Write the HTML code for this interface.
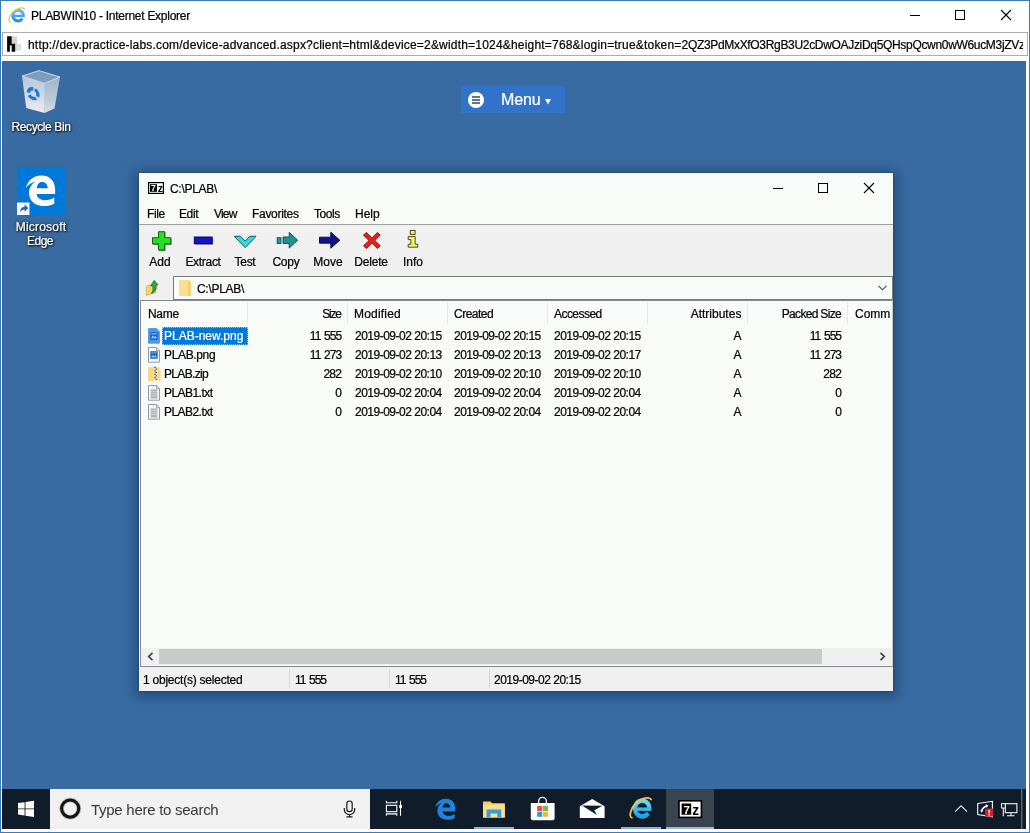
<!DOCTYPE html>
<html lang="en">
<head>
<meta charset="utf-8">
<title>PLABWIN10 - Internet Explorer</title>
<style>
html,body{margin:0;padding:0}
body{width:1030px;height:833px;position:relative;overflow:hidden;background:#fff;font-family:"Liberation Sans",sans-serif;font-size:12px;color:#000}
.a{position:absolute}
.t{position:absolute;white-space:nowrap;line-height:14px;font-size:12px;will-change:transform;-webkit-text-stroke-width:.22px}
svg{position:absolute;overflow:visible}
/* IE frame */
#frame{left:0;top:0;width:1030px;height:833px;background:#3a7ab8}
#inner{left:1px;top:1px;width:1027.5px;height:830.5px;background:#fff}
#addr{left:2px;top:32px;width:1024px;height:22px;border:1px solid #abadb3;background:#fff}
#desk{left:2px;top:61px;width:1024px;height:768px;background:#386ba1;overflow:hidden}
/* taskbar */
#task{left:0;top:728px;width:1024px;height:40px;background:#101c2a}
#search{left:48px;top:0;width:320px;height:40px;background:#f1f1f1}
/* desktop label */
.lbl{color:#fff;text-shadow:1px 1px 2px #000,0 0 3px rgba(0,0,0,.8);text-align:center}

/* 7-zip window (coords inside = page - (139,173)) */
#w7{left:137px;top:112px;width:754px;height:518px;background:#f9fbf9;box-shadow:0 0 0 1px rgba(35,70,115,.6),0 2px 12px 3px rgba(0,20,55,.42)}
#w7 .t{color:#000}
.hd{top:134px}
.sep{position:absolute;top:129px;width:1px;height:22px;background:#e6e8e6}
.r{text-align:right}
</style>
</head>
<body>
<div class="a" id="frame"></div>
<div class="a" id="inner"></div>

<!-- IE title bar -->
<svg style="left:0;top:0" width="30" height="30" viewBox="0 0 30 30">
  <defs><linearGradient id="ieg" x1="0" y1="0" x2="0" y2="1"><stop offset="0" stop-color="#62bdf2"/><stop offset="1" stop-color="#2b8fd8"/></linearGradient></defs>
  <path d="M23.400 15.200A5.300 5.300 0 1 0 22.400 18.700" fill="none" stroke="url(#ieg)" stroke-width="3"/>
  <path d="M13.800 15.900h11" stroke="#3fa6e8" stroke-width="2.300"/>
  <path d="M24.900 9.600C23.500 5.600 12.500 9 9.500 17.300C8.400 20.300 9 21.900 10.600 22.200" fill="none" stroke="#ecc548" stroke-width="1.300"/>
</svg>
<div class="t" style="left:31px;top:9px;letter-spacing:-.27px">PLABWIN10 - Internet Explorer</div>
<div class="a" style="left:910px;top:15px;width:10px;height:1px;background:#000"></div>
<div class="a" style="left:955px;top:10px;width:8px;height:8px;border:1px solid #000"></div>
<svg style="left:1001px;top:10px" width="10" height="10" viewBox="0 0 10 10"><path d="M0 0L10 10M10 0L0 10" stroke="#000" stroke-width="1.1" fill="none"/></svg>
<div class="a" id="addr"></div>
<svg style="left:7px;top:36px" width="15" height="16" viewBox="7 36 15 16">
  <rect x="11.700" y="36.500" width="5.200" height="14.700" fill="#d2d2d2"/><rect x="16.900" y="43.800" width="4.100" height="6.600" fill="#dedede"/>
  <path d="M7.100 36.200H11.700V43.800H15.100V51.800H11.700V45.600H9.900V51.800H7.100Z" fill="#080808"/>
</svg>
<div class="t" id="url" style="left:28px;top:38px;width:995px;overflow:hidden"><span style="letter-spacing:.194px">http://dev.practice-labs.com/device-advanced.aspx?client=html&amp;device=2&amp;width=1024&amp;height=768&amp;login=true&amp;token=</span><span style="letter-spacing:-.32px">2QZ3PdMxXfO3RgB3U2cDwOAJziDq5QHspQcwn0wW6ucM3jZVz</span></div>

<!-- remote desktop -->
<div class="a" id="desk">
  <!-- Recycle Bin (desk coords = page - (2,61)) -->
  <svg style="left:18px;top:8px" width="44" height="46" viewBox="20 69 44 46">
    <defs><linearGradient id="rb1" x1="0" y1="0" x2="0" y2="1"><stop offset="0" stop-color="#b4c6d8"/><stop offset=".6" stop-color="#d3dce6"/><stop offset=".8" stop-color="#e6e2e8"/><stop offset="1" stop-color="#ecebee"/></linearGradient>
    <linearGradient id="rb2" x1="0" y1="0" x2="0" y2="1"><stop offset="0" stop-color="#9db4cb"/><stop offset=".7" stop-color="#c2ccd8"/><stop offset="1" stop-color="#dcdde2"/></linearGradient></defs>
    <path d="M22 76L39 70.600L60 77L44.500 83.500Z" fill="#8da8c4"/>
    <path d="M24 76.200L39 71.600L57.500 77L44.500 82.300Z" fill="#7f9cbc"/>
    <path d="M22 76L44.500 83.500L44.600 113L26.200 108Z" fill="url(#rb1)"/>
    <path d="M44.500 83.500L60 77L54.500 108.500L44.600 113Z" fill="url(#rb2)"/>
    <path d="M22 76L39 70.600L60 77L44.500 83.500Z" fill="none" stroke="#dbe7f2" stroke-width=".9" stroke-opacity=".85"/>
    <path d="M44.500 83.500V113" stroke="#e4ebf2" stroke-width=".6" stroke-opacity=".7"/>
    <g transform="translate(33.200 93.600) skewY(14)">
      <circle r="4.700" fill="none" stroke="#1a7ad2" stroke-width="3.400" stroke-dasharray="7.600 2.240" transform="rotate(-70)"/>
    </g>
  </svg>
  <div class="t lbl" style="left:-11px;top:59px;width:100px;letter-spacing:-.4px">Recycle Bin</div>
  <!-- Microsoft Edge -->
  <div class="a" style="left:15px;top:106px;width:48px;height:49px;background:#0078d7"></div>
  <svg style="left:15px;top:106px" width="48" height="49" viewBox="17 167 48 49">
    <path fill-rule="evenodd" transform="translate(25.800 175.400) scale(1.460 1.450) translate(-435.200 -798.700)" d="M435.200 807.500C436.500 802 440.500 798.700 446 798.700C451.800 798.700 455.300 802.800 455.300 808.600V811.600H442.600C443 814.300 445.200 815.900 448.400 815.900C450.800 815.900 452.900 815.200 454.700 814V818.200C452.700 819.300 450.300 819.800 447.400 819.800C441.400 819.800 437.400 816 437.400 810.800C437.400 807.600 439 804.600 441.800 802.900C439 803.600 436.700 805.200 435.200 807.500ZM442.700 807.600H450.200C450.100 804.900 448.600 803.300 446.300 803.300C444.200 803.300 443 805 442.700 807.600Z" fill="#fff"/>
    <rect x="17" y="202.500" width="12.500" height="12.500" fill="#f4f6f8"/>
    <path d="M20 212.500c.2-3.600 1.800-5.600 4.600-5.800v-2.200l3.600 3.600-3.600 3.600v-2.200c-2 0-3.400.8-4.600 3z" fill="#2060b8"/>
  </svg>
  <div class="t lbl" style="left:-11px;top:158.500px;width:100px;letter-spacing:.19px">Microsoft</div>
  <div class="t lbl" style="left:-12px;top:172.500px;width:100px;letter-spacing:-.5px">Edge</div>
  <!-- Menu button -->
  <div class="a" style="left:459px;top:25px;width:104px;height:27px;background:#3273c9"></div>
  <div class="a" style="left:466px;top:30.500px;width:16px;height:16px;border-radius:50%;background:#fff"></div>
  <div class="a" style="left:470px;top:35px;width:8px;height:1.500px;background:#5b787f;box-shadow:0 3px 0 #5b787f,0 6px 0 #5b787f"></div>
  <div class="t" style="left:498.600px;top:29px;font-size:16px;line-height:20px;color:#fff;letter-spacing:-.1px">Menu</div>
  <svg style="left:543px;top:37.500px" width="6" height="6" viewBox="0 0 6 6"><path d="M0 0H6L3 5.600Z" fill="#fff"/></svg>

<div class="a" id="w7">
    <!-- title -->
    <svg style="left:9px;top:9px;will-change:transform" width="17" height="13" viewBox="0 0 17 13">
      <rect x=".6" y=".6" width="14.800" height="10.800" fill="#fff" stroke="#000" stroke-width="1.200"/>
      <rect x="2" y="2.200" width="7" height="7.600" fill="#000"/>
      <text x="3.100" y="9.200" font-family="Liberation Sans,sans-serif" font-weight="bold" font-size="8.500" fill="#fff">7</text>
      <text x="9.700" y="9.800" font-family="Liberation Sans,sans-serif" font-weight="bold" font-size="11.500" fill="#000" textLength="5.300" lengthAdjust="spacingAndGlyphs">z</text>
    </svg>
    <div class="t" style="left:30.500px;top:9px;letter-spacing:-.3px">C:\PLAB\</div>
    <div class="a" style="left:634px;top:15px;width:10px;height:1px;background:#000"></div>
    <div class="a" style="left:679px;top:10px;width:8px;height:8px;border:1px solid #000"></div>
    <svg style="left:725px;top:10px" width="10" height="10" viewBox="0 0 10 10"><path d="M0 0L10 10M10 0L0 10" stroke="#000" stroke-width="1.1" fill="none"/></svg>
    <!-- menu -->
    <div class="t" style="left:8.300px;top:34px;letter-spacing:-.4px">File</div>
    <div class="t" style="left:40.300px;top:34px;letter-spacing:-.4px">Edit</div>
    <div class="t" style="left:74.500px;top:34px;letter-spacing:-.8px">View</div>
    <div class="t" style="left:113.300px;top:34px;letter-spacing:-.3px">Favorites</div>
    <div class="t" style="left:174.700px;top:34px;letter-spacing:-.45px">Tools</div>
    <div class="t" style="left:216.200px;top:34px">Help</div>
    <div class="a" style="left:0;top:51px;width:754px;height:1px;background:#a0a0a0"></div>
    <!-- toolbar -->
    <div class="a" style="left:0;top:52px;width:754px;height:76px;background:#f0f0f0"></div>
    <svg style="left:0;top:52px" width="300" height="30" viewBox="139 225 300 30">
      <g stroke-linejoin="miter">
      <path d="M159.300 232.600h6.400v6.200h6.200v6.400h-6.200v6.200h-6.400v-6.200h-6.200v-6.400h6.200z" fill="#0a3d0a" opacity=".55" transform="translate(-.2 -.2)"/>
      <path d="M158.500 231.700h6.200v6h6v6.200h-6v6h-6.200v-6h-6v-6.200h6z" fill="#25df25" stroke="#0a6a0a" stroke-width="1"/>
      <rect x="195" y="237.800" width="18.200" height="7" fill="#101038" opacity=".5"/>
      <rect x="194.300" y="237" width="17.800" height="6.600" fill="#1414c8" stroke="#080860" stroke-width="1"/>
      <path d="M234.300 236.300h6.200l4.700 4.800 4.700-4.800h6.100l-10.800 11.300z" fill="#30dcdc" stroke="#0a5a5a" stroke-width="1"/>
      <rect x="277.200" y="237.700" width="3.700" height="5.700" fill="#2a9a9a" stroke="#0a4848" stroke-width=".9"/>
      <path d="M283 237h6.200v-4.700l8.500 7.900-8.500 7.900v-4.700h-6.200z" fill="#1f8f8f" stroke="#0a4848" stroke-width=".9"/>
      <path d="M319.500 237.200h11.300v-5l9 8-9 8v-5h-11.300z" fill="#12128c" stroke="#06063c" stroke-width=".9"/>
      <path d="M363.500 235.200l2.800-2.800 5.600 5.500 5.600-5.500 2.800 2.800-5.500 5.300 5.500 5.300-2.800 2.800-5.600-5.500-5.600 5.500-2.800-2.800 5.500-5.300z" fill="#e02222" stroke="#7a0c0c" stroke-width=".9"/>
      <rect x="410.300" y="230.400" width="4.800" height="4" fill="#f2f266" stroke="#3c3c10" stroke-width=".9"/>
      <path d="M408.200 236.600h7v7.600h2.600v3h-9.600v-3h2.600v-4.600h-2.600z" fill="#f2f266" stroke="#3c3c10" stroke-width=".9"/>
      </g>
    </svg>
    <div class="t" style="left:-29px;top:82px;width:100px;text-align:center">Add</div>
    <div class="t" style="left:13.500px;top:82px;width:100px;text-align:center;letter-spacing:-.3px">Extract</div>
    <div class="t" style="left:55.500px;top:82px;width:100px;text-align:center;letter-spacing:-.3px">Test</div>
    <div class="t" style="left:97px;top:82px;width:100px;text-align:center;letter-spacing:-.2px">Copy</div>
    <div class="t" style="left:139px;top:82px;width:100px;text-align:center">Move</div>
    <div class="t" style="left:181.500px;top:82px;width:100px;text-align:center;letter-spacing:-.2px">Delete</div>
    <div class="t" style="left:223.500px;top:82px;width:100px;text-align:center">Info</div>
    <!-- address row -->
    <svg style="left:7px;top:106px" width="18" height="18" viewBox="146 279 18 18">
      <path d="M146.300 286.300l3.200-1.300 1.400.8 4.600-1.200v8.200l-9.200 2.600z" fill="#f2d46e" stroke="#c2a548" stroke-width=".6"/>
      <path d="M151.300 293.300c1.800-1.700 2.200-4.600 1.200-7.600h-1.900l3.600-5.400 3.800 4.600h-2c1 3.600-.6 7.200-4.700 8.400z" fill="#3aa83a" stroke="#176317" stroke-width=".7"/>
    </svg>
    <div class="a" style="left:34px;top:103px;width:718px;height:22px;border:1px solid #7a7a7a;background:#f9fbf9"></div>
    <div class="a" style="left:39.500px;top:107px;width:11px;height:16px;background:#f8df8e;border-radius:1px"></div>
    <div class="a" style="left:49px;top:107.500px;width:2.500px;height:15.500px;background:#f2d372"></div>
    <div class="t" style="left:58px;top:109px;letter-spacing:-.3px">C:\PLAB\</div>
    <svg style="left:739px;top:112px" width="9" height="6" viewBox="0 0 9 6"><path d="M.5 .8L4.500 4.800L8.500 .8" stroke="#444" stroke-width="1.100" fill="none"/></svg>
    <!-- list view -->
    <div class="a" style="left:1px;top:127px;width:751px;height:365px;border:1px solid #828790;border-right-color:#c8cac8;background:#f9fbf9"></div>
    <div class="t hd" style="left:9.300px;letter-spacing:-.3px">Name</div>
    <div class="t hd r" style="left:140px;width:61.800px;letter-spacing:-1.200px">Size</div>
    <div class="t hd" style="left:215px;letter-spacing:.2px">Modified</div>
    <div class="t hd" style="left:315.300px;letter-spacing:-.5px">Created</div>
    <div class="t hd" style="left:415.200px;letter-spacing:-.55px">Accessed</div>
    <div class="t hd r" style="left:500px;width:102.400px">Attributes</div>
    <div class="t hd r" style="left:600px;width:102px;letter-spacing:-.68px">Packed Size</div>
    <div class="t hd" style="left:715.800px;width:35.200px;overflow:hidden">Comment</div>
    <div class="sep" style="left:108px"></div>
    <div class="sep" style="left:208px"></div>
    <div class="sep" style="left:308px"></div>
    <div class="sep" style="left:408px"></div>
    <div class="sep" style="left:508px"></div>
    <div class="sep" style="left:608px"></div>
    <div class="sep" style="left:708px"></div>
    <div class="a" style="left:23px;top:153.500px;width:86px;height:18px;background:#0078d7;outline:1px dotted #9cc8f0;outline-offset:-1px"></div>
    <svg style="left:9px;top:154.5px" width="12" height="16" viewBox="0 0 12 16"><path d="M.5 .5H8.300L11.500 3.700V15.200H.5Z" fill="#4a98e2" stroke="#5a9fe0" stroke-width="1"/><path d="M8.300 .5V3.700H11.500" fill="none" stroke="#5a9fe0" stroke-width=".9"/><rect x="2.300" y="4.200" width="7.400" height="7.600" fill="#1565c0"/><path d="M3 10.200l2-2.600 1.400 1.400 1.200-1 1.400 2.200z" fill="#9fd0ff"/><rect x="3.300" y="5.400" width="5.400" height="1" fill="#cfe8ff" opacity=".8"/></svg>
    <div class="t" style="left:25.400px;top:155.5px;color:#fff">PLAB-new.png</div>
    <div class="t r" style="left:140px;top:155.5px;width:62.200px;letter-spacing:-.95px;word-spacing:1.200px">11 555</div>
    <div class="t" style="left:215.500px;top:155.5px;letter-spacing:-.5px">2019-09-02 20:15</div>
    <div class="t" style="left:315.300px;top:155.5px;letter-spacing:-.5px">2019-09-02 20:15</div>
    <div class="t" style="left:415.200px;top:155.5px;letter-spacing:-.5px">2019-09-02 20:15</div>
    <div class="t r" style="left:500px;top:155.5px;width:102.500px">A</div>
    <div class="t r" style="left:600px;top:155.5px;width:102.100px;letter-spacing:-.95px;word-spacing:1.200px">11 555</div>
    <svg style="left:9px;top:173.5px" width="12" height="16" viewBox="0 0 12 16"><path d="M.5 .5H8.300L11.500 3.700V15.200H.5Z" fill="#ffffff" stroke="#8c98a4" stroke-width="1"/><path d="M8.300 .5V3.700H11.500" fill="none" stroke="#8c98a4" stroke-width=".9"/><rect x="2.300" y="4.200" width="7.400" height="7.600" fill="#1667c4"/><path d="M3 10.400l2-2.600 1.400 1.400 1.200-1 1.400 2.200z" fill="#8cc4f8"/><rect x="3.300" y="5.400" width="5.400" height=".9" fill="#b8dcff" opacity=".7"/></svg>
    <div class="t" style="left:25.400px;top:174.5px;letter-spacing:-.35px">PLAB.png</div>
    <div class="t r" style="left:140px;top:174.5px;width:62.200px;letter-spacing:-.95px;word-spacing:1.200px">11 273</div>
    <div class="t" style="left:215.500px;top:174.5px;letter-spacing:-.5px">2019-09-02 20:13</div>
    <div class="t" style="left:315.300px;top:174.5px;letter-spacing:-.5px">2019-09-02 20:13</div>
    <div class="t" style="left:415.200px;top:174.5px;letter-spacing:-.5px">2019-09-02 20:17</div>
    <div class="t r" style="left:500px;top:174.5px;width:102.500px">A</div>
    <div class="t r" style="left:600px;top:174.5px;width:102.100px;letter-spacing:-.95px;word-spacing:1.200px">11 273</div>
    <svg style="left:9px;top:192.5px" width="13" height="16" viewBox="0 0 13 16"><path d="M0 1.200H11.500V4.500H12.600V15H0Z" fill="#f6d978"/><rect x="5.600" y=".4" width="4.400" height="14.600" fill="#ece4c4"/><rect x="6.2" y="0.8" width="1.600" height="1.200" fill="#5b5b55"/><rect x="7.5" y="2.5" width="1.600" height="1.200" fill="#5b5b55"/><rect x="6.2" y="4.2" width="1.600" height="1.200" fill="#5b5b55"/><rect x="7.5" y="5.9" width="1.600" height="1.200" fill="#5b5b55"/><rect x="6.2" y="7.6" width="1.600" height="1.200" fill="#5b5b55"/><rect x="7.5" y="9.3" width="1.600" height="1.200" fill="#5b5b55"/><rect x="6.2" y="11" width="1.600" height="1.200" fill="#5b5b55"/><rect x="7.5" y="12.7" width="1.600" height="1.200" fill="#5b5b55"/></svg>
    <div class="t" style="left:25.400px;top:193.5px;letter-spacing:-.67px">PLAB.zip</div>
    <div class="t r" style="left:140px;top:193.5px;width:62.200px;letter-spacing:-.75px">282</div>
    <div class="t" style="left:215.500px;top:193.5px;letter-spacing:-.5px">2019-09-02 20:10</div>
    <div class="t" style="left:315.300px;top:193.5px;letter-spacing:-.5px">2019-09-02 20:10</div>
    <div class="t" style="left:415.200px;top:193.5px;letter-spacing:-.5px">2019-09-02 20:10</div>
    <div class="t r" style="left:500px;top:193.5px;width:102.500px">A</div>
    <div class="t r" style="left:600px;top:193.5px;width:102.100px;letter-spacing:-.75px">282</div>
    <svg style="left:9px;top:211.5px" width="12" height="16" viewBox="0 0 12 16"><path d="M.5 .5H8.300L11.500 3.700V15.200H.5Z" fill="#ffffff" stroke="#8c98a4" stroke-width="1"/><path d="M8.300 .5V3.700H11.500" fill="none" stroke="#8c98a4" stroke-width=".9"/><rect x="2.500" y="4.6" width="7" height="1" fill="#80868c"/><rect x="2.500" y="6.6" width="7" height="1" fill="#80868c"/><rect x="2.500" y="8.6" width="7" height="1" fill="#80868c"/><rect x="2.500" y="10.6" width="7" height="1" fill="#80868c"/><rect x="2.500" y="12.4" width="7" height="1" fill="#80868c"/></svg>
    <div class="t" style="left:25.400px;top:212.5px;letter-spacing:-.55px">PLAB1.txt</div>
    <div class="t r" style="left:140px;top:212.5px;width:62.200px;letter-spacing:-.75px">0</div>
    <div class="t" style="left:215.500px;top:212.5px;letter-spacing:-.5px">2019-09-02 20:04</div>
    <div class="t" style="left:315.300px;top:212.5px;letter-spacing:-.5px">2019-09-02 20:04</div>
    <div class="t" style="left:415.200px;top:212.5px;letter-spacing:-.5px">2019-09-02 20:04</div>
    <div class="t r" style="left:500px;top:212.5px;width:102.500px">A</div>
    <div class="t r" style="left:600px;top:212.5px;width:102.100px;letter-spacing:-.75px">0</div>
    <svg style="left:9px;top:230.5px" width="12" height="16" viewBox="0 0 12 16"><path d="M.5 .5H8.300L11.500 3.700V15.200H.5Z" fill="#ffffff" stroke="#8c98a4" stroke-width="1"/><path d="M8.300 .5V3.700H11.500" fill="none" stroke="#8c98a4" stroke-width=".9"/><rect x="2.500" y="4.6" width="7" height="1" fill="#80868c"/><rect x="2.500" y="6.6" width="7" height="1" fill="#80868c"/><rect x="2.500" y="8.6" width="7" height="1" fill="#80868c"/><rect x="2.500" y="10.6" width="7" height="1" fill="#80868c"/><rect x="2.500" y="12.4" width="7" height="1" fill="#80868c"/></svg>
    <div class="t" style="left:25.400px;top:231.5px;letter-spacing:-.55px">PLAB2.txt</div>
    <div class="t r" style="left:140px;top:231.5px;width:62.200px;letter-spacing:-.75px">0</div>
    <div class="t" style="left:215.500px;top:231.5px;letter-spacing:-.5px">2019-09-02 20:04</div>
    <div class="t" style="left:315.300px;top:231.5px;letter-spacing:-.5px">2019-09-02 20:04</div>
    <div class="t" style="left:415.200px;top:231.5px;letter-spacing:-.5px">2019-09-02 20:04</div>
    <div class="t r" style="left:500px;top:231.5px;width:102.500px">A</div>
    <div class="t r" style="left:600px;top:231.5px;width:102.100px;letter-spacing:-.75px">0</div>
    <!-- h scrollbar -->
    <div class="a" style="left:2px;top:475px;width:750px;height:17px;background:#f0f0f0"></div>
    <div class="a" style="left:20px;top:476px;width:663px;height:15px;background:#c9cbc9"></div>
    <svg style="left:8px;top:478.500px" width="7" height="9" viewBox="0 0 7 9"><path d="M5.500 .8L1.700 4.500L5.500 8.200" stroke="#404040" stroke-width="1.700" fill="none"/></svg>
    <svg style="left:739.500px;top:478.500px" width="7" height="9" viewBox="0 0 7 9"><path d="M1.500 .8L5.300 4.500L1.500 8.200" stroke="#404040" stroke-width="1.700" fill="none"/></svg>
    <!-- status bar -->
    <div class="a" style="left:0;top:494px;width:754px;height:24px;background:#f0f0f0"></div>
    <div class="t" style="left:3.800px;top:499.500px;letter-spacing:-.23px">1 object(s) selected</div>
    <div class="t" style="left:156px;top:499.500px;letter-spacing:-1px;word-spacing:1.200px">11 555</div>
    <div class="t" style="left:255.900px;top:499.500px;letter-spacing:-1px;word-spacing:1.200px">11 555</div>
    <div class="t" style="left:355.300px;top:499.500px;letter-spacing:-.5px">2019-09-02 20:15</div>
    <div class="a" style="left:150px;top:496px;width:1px;height:19px;background:#d7d7d7"></div>
    <div class="a" style="left:250px;top:496px;width:1px;height:19px;background:#d7d7d7"></div>
    <div class="a" style="left:350px;top:496px;width:1px;height:19px;background:#d7d7d7"></div>
  </div>
  <div class="a" id="task">
    <div class="a" id="search"></div>
    <!-- 7z active button bg + running indicators (task coords = page - (2,789)) -->
    <div class="a" style="left:664px;top:0;width:48px;height:40px;background:#3a444f"></div>
    <div class="a" style="left:664px;top:38px;width:48px;height:2px;background:#9fb6d4"></div>
    <div class="a" style="left:472px;top:38px;width:40px;height:2px;background:#8fb0d8"></div>
    <div class="a" style="left:619px;top:38px;width:40px;height:2px;background:#8fb0d8"></div>
    <svg style="left:0;top:0;will-change:transform" width="1024" height="40" viewBox="2 789 1024 40">
      <!-- start -->
      <path d="M18 803.100l6.600-.9v6.200h-6.600zM25.500 802.050l8.500-1.200v7.550h-8.500zM18 809.300h6.600v6.200l-6.600-.9zM25.500 809.300h8.500v7.600l-8.500-1.200z" fill="#fff"/>
      <!-- cortana ring -->
      <circle cx="70.200" cy="808.600" r="8.600" fill="none" stroke="#000" stroke-opacity=".25" stroke-width="4.600"/>
      <circle cx="70.200" cy="808.600" r="8.600" fill="none" stroke="#141414" stroke-width="3"/>
      <text x="91" y="815" font-family="Liberation Sans,sans-serif" font-size="15" fill="#383838" letter-spacing="-.27">Type here to search</text>
      <!-- mic -->
      <g fill="none" stroke="#1a1a1a" stroke-width="1.200">
        <rect x="346.800" y="801" width="5.400" height="10.600" rx="2.700"/>
        <path d="M344.300 808v1.500a5.200 5.200 0 0 0 10.400 0V808M349.500 814.700v2M346.500 816.800h6"/>
      </g>
      <!-- task view -->
      <g fill="none" stroke="#fff" stroke-width="1.100">
        <rect x="386.400" y="805.300" width="10.400" height="6.400"/>
        <path d="M386.400 800.800v1.900h10.400v-1.900M386.400 815.800v-1.900h10.400v1.900M400.500 800.800v15"/>
      </g>
      <rect x="399.300" y="805" width="2.700" height="3" fill="#fff"/>
      <!-- edge -->
      <path fill-rule="evenodd" d="M435.200 807.500C436.500 802 440.500 798.700 446 798.700C451.800 798.700 455.300 802.800 455.300 808.600V811.600H442.600C443 814.300 445.200 815.900 448.400 815.900C450.800 815.900 452.900 815.200 454.700 814V818.200C452.700 819.300 450.300 819.800 447.400 819.800C441.400 819.800 437.400 816 437.400 810.800C437.400 807.600 439 804.600 441.800 802.900C439 803.600 436.700 805.200 435.200 807.500ZM442.700 807.600H450.200C450.100 804.900 448.600 803.300 446.300 803.300C444.200 803.300 443 805 442.700 807.600Z" fill="#1f83dc"/>
      <!-- explorer -->
      <path d="M483 801.500h7.500l1.500 1.800h12.800v14.300H483z" fill="#f4cf63"/>
      <path d="M483 804.600h21.800v13H483z" fill="#fbe08c"/>
      <path d="M486.500 817.600v-6.800a1.200 1.200 0 0 1 1.200-1.200h12.400a1.200 1.200 0 0 1 1.200 1.200v6.800h-4v-4h-6.800v4z" fill="#3c9bd8"/>
      <!-- store -->
      <path d="M538.600 803.500v-2.300a3.900 3.900 0 0 1 7.800 0v2.300" fill="none" stroke="#fff" stroke-width="1.300"/>
      <path d="M530.800 803h23.800v15.300a2 2 0 0 1-2 2h-19.800a2 2 0 0 1-2-2z" fill="#fff"/>
      <rect x="537.200" y="806" width="5" height="5" fill="#e8503a"/><rect x="543" y="806" width="5" height="5" fill="#7cba3c"/>
      <rect x="537.200" y="811.800" width="5" height="5" fill="#2d9be0"/><rect x="543" y="811.800" width="5" height="5" fill="#f5b82e"/>
      <!-- mail -->
      <path d="M579.800 806.200l12.400-7.200 12.400 7.200v11.800h-24.800z" fill="#fff"/>
      <path d="M582 805.600l20.500 .2-8.200 4.400 2.600 4.800z" fill="#101c2a"/>
      <!-- IE -->
      <defs><linearGradient id="ieg2" x1="0" y1="0" x2="0" y2="1"><stop offset="0" stop-color="#6fd6f4"/><stop offset="1" stop-color="#259fe0"/></linearGradient></defs>
      <g transform="translate(642.200 808.400) scale(1 1.090)">
        <path d="M7.200 -.4A7.200 7.200 0 1 0 5.900 4.300" fill="none" stroke="url(#ieg2)" stroke-width="4.200"/>
        <path d="M-5.500 .7h14.700" stroke="#3cb6ea" stroke-width="3.200"/>
      </g>
      <path d="M651.600 800.200C649.500 794.500 635 799.500 631 811C629.500 815.200 630.200 817.500 632.500 818" fill="none" stroke="#e8c64e" stroke-width="1.800"/>
      <!-- 7z -->
      <rect x="679" y="800.800" width="22.400" height="16.600" fill="#fff" stroke="#000" stroke-width="1.600"/>
      <rect x="681.600" y="803.500" width="9.600" height="11.200" fill="#000"/>
      <text x="683.400" y="813.500" font-family="Liberation Sans,sans-serif" font-weight="bold" font-size="11.500" fill="#fff">7</text>
      <text x="692.300" y="814.600" font-family="Liberation Sans,sans-serif" font-weight="bold" font-size="14.500" fill="#000" textLength="6.800" lengthAdjust="spacingAndGlyphs">z</text>
      <!-- tray -->
      <path d="M955.200 811.700l5.900-6 5.900 6" fill="none" stroke="#f4f4f4" stroke-width="1.150"/>
      <path d="M977.700 803.500l14.700-2.200v15.500l-14.700-2.200z" fill="none" stroke="#f4f4f4" stroke-width="1.150"/>
      <path d="M981.500 811.500c.6-3 2.600-5 5.600-5.600" fill="none" stroke="#fff" stroke-width="1.500"/>
      <path d="M985.600 804.300l3 1.300-2.400 2.200zM980.400 809.800l2.800 .6-2 2.400z" fill="#fff"/>
      <rect x="985" y="808.600" width="8" height="8" fill="#d0202e"/>
      <rect x="988.500" y="809.800" width="1.300" height="3.600" fill="#fff"/><rect x="988.500" y="814.200" width="1.300" height="1.300" fill="#fff"/>
      <g fill="none" stroke="#f4f4f4" stroke-width="1.100">
        <rect x="1005.300" y="803.700" width="11.600" height="9"/>
        <path d="M1011 812.700v2.900M1007 815.700h7.600"/>
        <rect x="1001.500" y="803.700" width="3.800" height="4.300" fill="#101c2a" stroke-width="1"/>
        <path d="M1003.300 808v8.200"/>
      </g>
      <rect x="1021.300" y="789" width="1" height="40" fill="#7d858e"/>
    </svg>
  </div>
</div>
</body>
</html>
